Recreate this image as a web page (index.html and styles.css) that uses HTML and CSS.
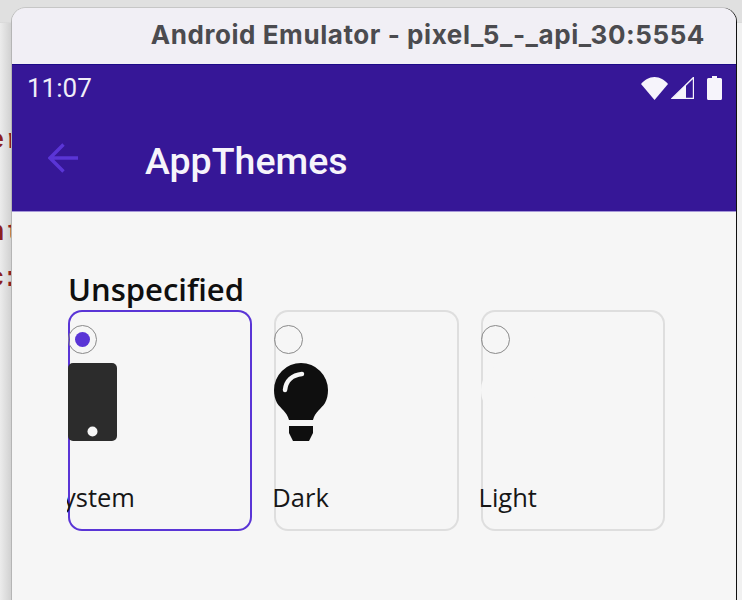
FILE: index.html
```html
<!DOCTYPE html>
<html>
    <head>
        <title>AppThemes</title>
        <meta charset="UTF-8">
        <link rel="stylesheet" href="styles.css">
    </head>
    <body>
        <div class="editor-behind">
            <span class="behind-line line-one">er</span>
            <span class="behind-line line-two">nt</span>
            <span class="behind-line line-three">c:</span>
        </div>

        <div class="emulator">
            <div class="title-bar">Android Emulator - pixel_5_-_api_30:5554</div>

            <div class="app-header">
                <div class="status-bar">
                    <span class="clock">11:07</span>
                    <div class="status-icons">
                        <svg class="icon-wifi" width="27" height="23" viewBox="0 0 27 23">
                            <path d="M13.5 23 L0 7 C3.5 3 8 0 13.5 0 C19 0 23.5 3 27 7 Z" fill="#f6f4fb"/>
                        </svg>
                        <svg class="icon-signal" width="23" height="22" viewBox="0 0 23 22">
                            <path d="M22.5 0.5 V21.5 H1 Z" fill="none" stroke="#f6f4fb" stroke-width="1.4"/>
                            <path d="M15 8 V22 H1 Z" fill="#f6f4fb"/>
                        </svg>
                        <svg class="icon-battery" width="15" height="24" viewBox="0 0 15 24">
                            <path d="M5 0 H10 V2 H13.5 Q15 2 15 3.5 V22.5 Q15 24 13.5 24 H1.5 Q0 24 0 22.5 V3.5 Q0 2 1.5 2 H5 Z" fill="#f6f4fb"/>
                        </svg>
                    </div>
                </div>
                <div class="toolbar">
                    <svg class="back-arrow" width="30" height="30" viewBox="0 0 30 30">
                        <path d="M30 15 H3 M15.5 1.5 L2 15 L15.5 28.5" fill="none" stroke="#5a35d6" stroke-width="3.4"/>
                    </svg>
                    <span class="app-title">AppThemes</span>
                </div>
            </div>

            <div class="content">
                <h2 class="group-label">Unspecified</h2>
                <div class="theme-cards">
                    <div class="theme-card selected">
                        <span class="radio"><span class="radio-dot"></span></span>
                        <svg class="theme-icon" width="49" height="78" viewBox="0 0 49 78">
                            <rect width="49" height="78" rx="5" fill="#2c2c2c"/>
                            <circle cx="24.5" cy="68.5" r="5" fill="#f6f6f6"/>
                        </svg>
                        <span class="theme-name clipped"><span class="name-shift">ystem</span></span>
                    </div>
                    <div class="theme-card">
                        <span class="radio"></span>
                        <svg class="theme-icon" width="54" height="78" viewBox="0 0 54 78">
                            <path d="M15 57 C13 49 7 46 3 40 C1 36 0 32 0 27 A27 27 0 0 1 54 27 C54 32 53 36 51 40 C47 46 41 49 39 57 Z" fill="#0f0f0f"/>
                            <path d="M15 63 H39 V70 L35 78 H19 L15 70 Z" fill="#0f0f0f"/>
                            <path d="M11 27 C12 18 18 12 28 11" fill="none" stroke="#f6f6f6" stroke-width="4.5" stroke-linecap="round"/>
                        </svg>
                        <span class="theme-name">Dark</span>
                    </div>
                    <div class="theme-card">
                        <span class="radio"></span>
                        <svg class="theme-icon" width="54" height="78" viewBox="0 0 54 78">
                            <path d="M15 57 C13 49 7 46 3 40 C1 36 0 32 0 27 A27 27 0 0 1 54 27 C54 32 53 36 51 40 C47 46 41 49 39 57 Z" fill="#f6f6f6"/>
                        </svg>
                        <span class="theme-name">Light</span>
                    </div>
                </div>
            </div>
        </div>
    </body>
</html>
```

FILE: styles.css
```css
* {
    box-sizing: border-box;
    margin: 0;
    padding: 0;
}

body {
    width: 742px;
    height: 600px;
    overflow: hidden;
    position: relative;
    background: linear-gradient(to bottom, #e0e0e0 0, #e0e0e0 22px, #c4c4c4 22px, #f1f1f1 23px);
    padding: 8px 6px 0 12px;
}

.editor-behind {
    position: absolute;
    left: 0;
    top: 0;
    width: 12px;
    height: 600px;
    overflow: hidden;
    background: linear-gradient(to right, #ececec, #cfcfcf);
    clip-path: inset(23px 0 0 0);
    font-family: "Liberation Mono", monospace;
    font-weight: bold;
    font-size: 27px;
    color: #8e1f1f;
}

.behind-line {
    position: absolute;
    left: -12px;
    white-space: nowrap;
    line-height: 28px;
    letter-spacing: 2px;
}

.line-one { top: 127px; }
.line-two { top: 219px; }
.line-three { top: 265px; letter-spacing: -2px; }

.emulator {
    position: relative;
    width: 724px;
    height: 592px;
    border-radius: 14px 14px 0 0;
    background: #f6f6f6;
    box-shadow: 1px 0 0 #111, 0 -1px 0 #c6c6c6, -1px 0 0 #b5b5b5;
    overflow: hidden;
}

.title-bar {
    height: 56px;
    padding: 12px 31px 0 0;
    background: #f1eff5;
    color: #4b4b4f;
    font-family: Inter, sans-serif;
    font-size: 26px;
    font-weight: 700;
    letter-spacing: 0.57px;
    line-height: 30px;
    text-align: right;
    white-space: nowrap;
}

.app-header {
    height: 148px;
    background: #361797;
    border-top: 1px solid #1d0a87;
    border-bottom: 1px solid #a597d8;
}

.status-bar {
    height: 46px;
    display: flex;
    align-items: center;
    justify-content: space-between;
    padding: 0 14px 0 15px;
}

.clock {
    color: #f0eef8;
    font-family: Roboto, sans-serif;
    font-size: 26px;
}

.status-icons {
    display: flex;
    align-items: center;
    gap: 3px;
}

.icon-battery {
    margin-left: 10px;
}

.toolbar {
    display: flex;
    align-items: center;
    height: 94px;
    padding-left: 36px;
}

.app-title {
    margin: 6px 0 0 67px;
    color: #f6f4fb;
    font-family: Roboto, sans-serif;
    font-size: 37.5px;
    font-weight: 500;
}

.content {
    padding: 57px 0 0 56px;
}

.group-label {
    font-family: "Open Sans", sans-serif;
    font-size: 31px;
    font-weight: 600;
    line-height: 41px;
    color: #0f0f0f;
}

.theme-cards {
    display: flex;
    gap: 22px;
}

.theme-card {
    width: 184.3px;
    height: 221px;
    border-radius: 14px;
    box-shadow: inset 0 0 0 2px #dedede;
    display: flex;
    flex-direction: column;
    align-items: flex-start;
    padding-top: 15px;
}

.theme-card.selected {
    box-shadow: inset 0 0 0 2px #5a35d6;
}

.radio {
    width: 29px;
    height: 29px;
    border: 1px solid #8a8a8a;
    border-radius: 50%;
    display: flex;
    align-items: center;
    justify-content: center;
}

.radio-dot {
    width: 15px;
    height: 15px;
    border-radius: 50%;
    background: #5a35d6;
}

.theme-icon {
    margin-top: 9px;
}

.theme-name {
    margin: 39px 0 0 -2px;
    font-family: "Open Sans", sans-serif;
    font-size: 25.5px;
    line-height: 34px;
    color: #161616;
}

.theme-name.clipped {
    margin-left: -1px;
    overflow: hidden;
}

.name-shift {
    display: block;
    margin-left: -4px;
}
```
